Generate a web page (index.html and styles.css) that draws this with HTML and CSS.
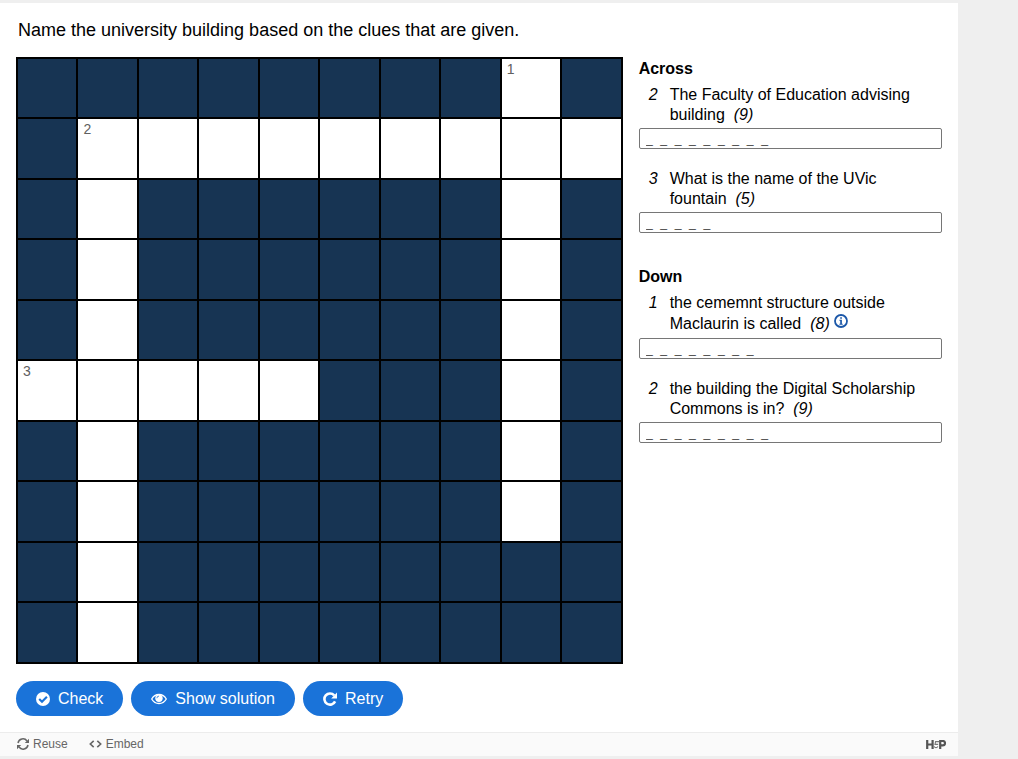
FILE: index.html
```html
<!DOCTYPE html>
<html lang="en">
<head>
<meta charset="utf-8">
<title>Crossword</title>
<link rel="stylesheet" href="styles.css">
</head>
<body>
<main class="frame">
  <div class="content">
    <p class="task">Name the university building based on the clues that are given.</p>
    <div class="columns">
      <div class="board" id="board"></div>
      <div class="clues">
        <section class="group">
          <h2 class="heading">Across</h2>
          <div class="clue">
            <label class="line" for="a2"><em class="num">2</em><span>The Faculty of Education advising building&nbsp; <em>(9)</em></span></label>
            <input class="answer" id="a2" type="text" value="_ _ _ _ _ _ _ _ _">
          </div>
          <div class="clue">
            <label class="line" for="a3"><em class="num">3</em><span>What is the name of the UVic fountain&nbsp; <em>(5)</em></span></label>
            <input class="answer" id="a3" type="text" value="_ _ _ _ _">
          </div>
        </section>
        <section class="group">
          <h2 class="heading">Down</h2>
          <div class="clue">
            <div class="line"><em class="num">1</em><span><label for="d1">the cememnt structure outside Maclaurin is called&nbsp; <em>(8)</em></label><button class="info" type="button" aria-label="Extra clue"><svg width="14" height="14" viewBox="0 0 14 14"><circle cx="7" cy="7" r="6" fill="none" stroke="#1b57a8" stroke-width="1.8"/><path d="M6.2 3.2h1.7v1.5H6.2zM5.4 5.8h2.5v4h.8v.9H5.4v-.9h.8V6.7h-.8z" fill="#1b57a8"/></svg></button></span></div>
            <input class="answer" id="d1" type="text" value="_ _ _ _ _ _ _ _">
          </div>
          <div class="clue">
            <label class="line" for="d2"><em class="num">2</em><span>the building the Digital Scholarship Commons is in?&nbsp; <em>(9)</em></span></label>
            <input class="answer" id="d2" type="text" value="_ _ _ _ _ _ _ _ _">
          </div>
        </section>
      </div>
    </div>
    <div class="buttons">
      <button class="btn" type="button"><svg width="14" height="14" viewBox="0 0 14 14"><circle cx="7" cy="7" r="7" fill="#fff"/><path d="M3.2 7l2.8 2.8 4.9-5" fill="none" stroke="#1a73d9" stroke-width="2.1"/></svg>Check</button>
      <button class="btn" type="button"><svg width="16" height="12" viewBox="0 0 16 12"><path d="M.7 6C4 0 12 0 15.3 6 12 12 4 12 .7 6z" fill="none" stroke="#fff" stroke-width="1.3"/><circle cx="8" cy="5.2" r="3.7" fill="#fff"/><path d="M5.9 5.2A2.1 2.1 0 0 1 8 3.1" fill="none" stroke="#1a73d9" stroke-width=".8"/></svg>Show solution</button>
      <button class="btn" type="button"><svg width="14" height="14" viewBox="0 0 14 14"><path d="M11.2 3.3A5.6 5.6 0 1 0 12.1 9.4" fill="none" stroke="#fff" stroke-width="2.6"/><path d="M14 .6v5.8H8.2z" fill="#fff"/></svg>Retry</button>
    </div>
  </div>
  <footer class="footer">
    <button class="action" type="button"><svg width="12" height="12" viewBox="0 0 12 12"><path d="M1 5A5 5 0 0 1 10 3M11 7A5 5 0 0 1 2 9" fill="none" stroke="#666" stroke-width="1.5"/><path d="M12 .7v4.2H7.8zM0 11.3V7.1h4.2z" fill="#666"/></svg>Reuse</button>
    <button class="action" type="button"><svg width="13" height="8" viewBox="0 0 13 8"><path d="M4.7.8L1.3 4l3.4 3.2M8.3.8L11.7 4 8.3 7.2" fill="none" stroke="#666" stroke-width="1.6"/></svg>Embed</button>
    <a class="logo" href="#" aria-label="H5P"><svg width="20" height="9" viewBox="0 0 20 9"><path d="M1.2 0v9M6.6 0v9M1.2 4.5h5.4M14.2 9V1h2.6a2.1 2.1 0 0 1 0 4.4h-2.6" fill="none" stroke="#555" stroke-width="2.2"/><path d="M13 1.6H9.6L9 4.4h3.2M8.2 6.4c.6 1.6 3 1.6 3.6 0" fill="none" stroke="#777" stroke-width="1.1"/></svg></a>
  </footer>
</main>
<script src="board.js"></script>
</body>
</html>
```
FILE: styles.css
```css
* { box-sizing: border-box; }
body {
  margin: 0;
  padding: 3px 60px 3px 0;
  background: #efefef;
  color: #000;
  font: 16px/20px "Liberation Sans", Arial, sans-serif;
}
.frame { background: #fff; }
.content { padding: 16px; }
.task { margin: 0 0 16px; padding: 0 2px; font-size: 18px; line-height: 22px; }
.columns { display: grid; grid-template-columns: 2fr 1fr; gap: 16px; }
.board {
  display: grid;
  grid-template-columns: repeat(10, 1fr);
  gap: 2px;
  padding: 2px;
  background: #000;
  align-self: start;
}
.cell { position: relative; aspect-ratio: 1; background: #173453; }
.open { background: #fff; }
.letter {
  display: block;
  width: 100%;
  height: 100%;
  padding: 0;
  border: 0;
  background: none;
  text-align: center;
  font: 24px "Liberation Sans", Arial, sans-serif;
}
.mark { position: absolute; left: 5px; top: 2px; font-size: 14px; line-height: 16px; color: #606060; }
.clues { padding-top: 2px; }
.group { margin-bottom: 34px; }
.heading { margin: 0 0 6px; font-size: 16px; line-height: 20px; }
.clue { margin-bottom: 20px; }
.group .clue:last-child { margin-bottom: 0; }
.line { display: grid; grid-template-columns: 21px 1fr; padding-left: 10px; margin-bottom: 3px; }
.answer {
  display: block;
  width: 100%;
  height: 21px;
  padding: 5px 6px 0;
  border: 1px solid #767676;
  border-radius: 2px;
  background: #fff;
  color: #000;
  font: 12px "Liberation Mono", monospace;
}
.info { padding: 0; margin-left: 4px; border: 0; background: none; line-height: 22px; vertical-align: 1px; }
.buttons { display: flex; flex-wrap: wrap; gap: 8px; margin-top: 17px; }
.btn {
  display: flex;
  align-items: center;
  gap: 8px;
  height: 35px;
  padding: 1px 20px 0;
  border: 0;
  border-radius: 18px;
  background: #1a73d9;
  color: #fff;
  font: 16px "Liberation Sans", Arial, sans-serif;
}
.footer {
  display: flex;
  align-items: center;
  gap: 21px;
  height: 24px;
  padding: 0 12px 0 17px;
  border-top: 1px solid #ececec;
  background: #fafafa;
}
.action {
  display: flex;
  align-items: center;
  gap: 4px;
  padding: 0;
  border: 0;
  background: none;
  color: #666;
  font: 12px "Liberation Sans", Arial, sans-serif;
}
.logo { display: flex; margin-left: auto; }
```
FILE: board.js
```js
const rows = [
  "........1.",
  ".2########",
  ".#......#.",
  ".#......#.",
  ".#......#.",
  "3####...#.",
  ".#......#.",
  ".#......#.",
  ".#........",
  ".#........"
];
const board = document.getElementById("board");
rows.forEach((row, y) => [...row].forEach((c, x) => {
  const cell = document.createElement("div");
  cell.className = c === "." ? "cell" : "cell open";
  if (c !== ".") {
    const input = document.createElement("input");
    input.className = "letter";
    input.maxLength = 1;
    input.setAttribute("aria-label", `Row ${y + 1}, column ${x + 1}`);
    cell.append(input);
    if (c !== "#") {
      const mark = document.createElement("span");
      mark.className = "mark";
      mark.textContent = c;
      cell.append(mark);
    }
  }
  board.append(cell);
}));
```
